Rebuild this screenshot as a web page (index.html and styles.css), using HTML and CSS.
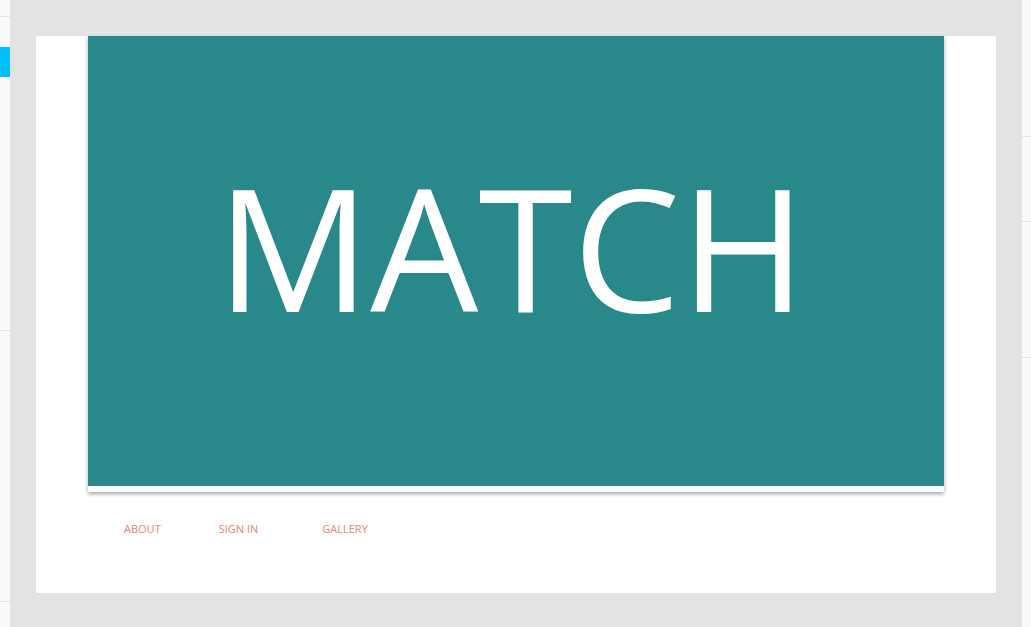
FILE: index.html
```html
<!DOCTYPE html>
<html>
<head>
<meta charset="utf-8">
<link rel="stylesheet" href="styles.css">
</head>
<body>
<div class="app">
  <aside class="side side-left">
    <div class="row r1"></div>
    <div class="row r2 active"></div>
    <div class="row r3"></div>
    <div class="row r4"></div>
  </aside>
  <main class="canvas">
    <div class="card">
      <div class="hero-wrap">
        <div class="hero"><h1 class="title">MATCH</h1></div>
      </div>
      <nav class="nav">
        <a class="link">ABOUT</a>
        <a class="link">SIGN IN</a>
        <a class="link">GALLERY</a>
      </nav>
    </div>
  </main>
  <aside class="side side-right">
    <div class="row q1"></div>
    <div class="row q2"></div>
    <div class="row q3"></div>
    <div class="row q4"></div>
  </aside>
</div>
</body>
</html>
```

FILE: styles.css
```css
* { box-sizing: border-box; margin: 0; padding: 0; }
html, body { width: 1031px; height: 627px; overflow: hidden; }
body { font-family: "Open Sans", "Noto Sans", sans-serif; background: #e3e3e3; }
.app { display: flex; width: 1031px; height: 627px; }
.side { background: #fafafa; display: flex; flex-direction: column; flex: none; }
.side-left { width: 10px; }
.side-right { width: 9px; }
.row { border-bottom: 1px solid #e4e4e4; }
.r1 { height: 17px; }
.r2 { height: 30px; border-bottom: none; }
.r2.active { margin-top: 30px; background: #00bfff; }
.r3 { height: 254px; }
.r4 { height: 271px; }
.q1 { height: 137px; }
.q2 { height: 85px; }
.q3 { height: 136px; }
.q4 { flex: 1; border-bottom: none; }
.canvas { flex: 1; padding: 36px 26px 34px 26px; display: flex; }
.card { background: #fff; width: 960px; height: 557px; padding: 0 52px; display: flex; flex-direction: column; }
.hero-wrap { background: #fff; padding-bottom: 6px; box-shadow: 0 2px 4px rgba(0,0,0,0.35); }
.hero { background: #29888a; height: 450px; display: flex; align-items: center; justify-content: center; }
.title { color: #fff; font-weight: 400; font-size: 171px; line-height: 1; margin-top: -31px; margin-left: -9px; }
.nav { display: flex; padding: 29px 0 0 36px; gap: 58px; }
.link { color: #ee8272; font-size: 11px; text-decoration: none; }
.link:nth-child(3) { margin-left: 6px; }
```
